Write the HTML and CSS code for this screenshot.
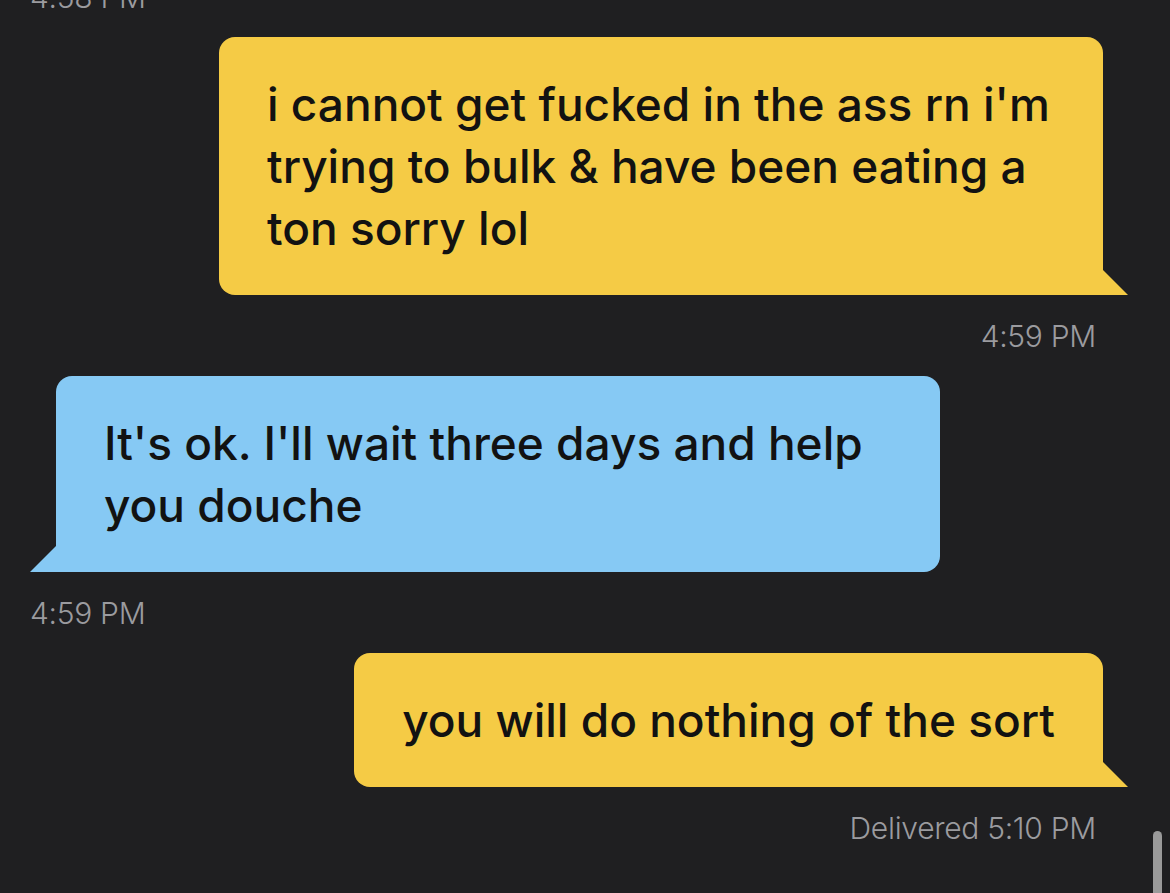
FILE: index.html
```html
<!DOCTYPE html>
<html lang="en">

<head>
    <meta charset="UTF-8">
    <meta name="viewport" content="width=device-width, initial-scale=1.0">
    <title>Chat</title>
    <link rel="stylesheet" href="styles.css">
</head>

<body>
    <div class="thread">
        <div class="msg received">
            <div class="time">4:58 PM</div>
        </div>

        <div class="msg sent">
            <div class="bubble">i cannot get fucked in the ass rn i'm trying to bulk &amp; have been eating a ton sorry lol</div>
            <div class="time">4:59 PM</div>
        </div>

        <div class="msg received">
            <div class="bubble">It's ok. I'll wait three days and help you douche</div>
            <div class="time">4:59 PM</div>
        </div>

        <div class="msg sent">
            <div class="bubble">you will do nothing of the sort</div>
            <div class="time">Delivered 5:10 PM</div>
        </div>
    </div>

    <div class="scroll-thumb"></div>
</body>

</html>
```

FILE: styles.css
```css
html,
body {
    height: 100%;
}

body {
    margin: 0;
    background-color: #1f1f21;
    font-family: Inter, "Noto Sans", sans-serif;
    overflow: hidden;
}

.thread {
    display: flex;
    flex-direction: column;
    padding: 0 42px 0 30px;
    margin-top: -44px;
}

.msg {
    display: flex;
    flex-direction: column;
}

.msg.sent {
    align-items: flex-end;
}

.msg.received {
    align-items: flex-start;
}

.bubble {
    position: relative;
    max-width: 788px;
    padding: 36px 48px 36px;
    font-size: 46px;
    font-weight: 500;
    line-height: 62px;
    color: #121212;
    border-radius: 16px;
}

.sent .bubble {
    margin-right: 25px;
    background-color: #f5cb45;
    border-bottom-right-radius: 0;
}

.received .bubble {
    margin-left: 26px;
    background-color: #86c9f4;
    border-bottom-left-radius: 0;
}

/* little tail in the bottom corner */
.bubble::after {
    content: "";
    position: absolute;
    bottom: 0;
    width: 26px;
    height: 26px;
}

.sent .bubble::after {
    right: -25px;
    background-color: #f5cb45;
    clip-path: polygon(0 0, 100% 100%, 0 100%);
}

.received .bubble::after {
    left: -26px;
    background-color: #86c9f4;
    clip-path: polygon(100% 0, 100% 100%, 0 100%);
}

.time {
    margin: 21px 0 20px;
    font-size: 30px;
    font-weight: 300;
    letter-spacing: -0.3px;
    line-height: 40px;
    color: #9b9b9f;
}

.sent .time {
    margin-right: 32px;
}

.scroll-thumb {
    position: absolute;
    top: 831px;
    right: 8px;
    width: 9px;
    height: 80px;
    border-radius: 5px;
    background-color: #9a9a9a;
}
```
